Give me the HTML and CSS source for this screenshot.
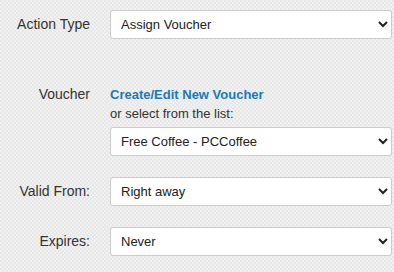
FILE: index.html
```html
<!DOCTYPE html>
<html lang="en">
<head>
    <meta charset="UTF-8">
    <title>Action Settings</title>
    <link rel="stylesheet" href="styles.css">
</head>
<body>

    <div class="form">
        <div class="row">
            <label class="label">Action Type</label>
            <select class="field">
                <option>Assign Voucher</option>
            </select>
        </div>

        <!-- voucher picker -->
        <div class="row row-top voucher-row">
            <label class="label">Voucher</label>
            <div class="voucher">
                <a href="#" class="link">Create/Edit New Voucher</a>
                <div class="hint">or select from the list:</div>
                <select class="field">
                    <option>Free Coffee - PCCoffee</option>
                </select>
            </div>
        </div>

        <div class="row">
            <label class="label">Valid From:</label>
            <select class="field">
                <option>Right away</option>
            </select>
        </div>

        <div class="row">
            <label class="label">Expires:</label>
            <select class="field">
                <option>Never</option>
            </select>
        </div>
    </div>

</body>
</html>
```

FILE: styles.css
```css
body {
    margin: 0;
    font-family: "Liberation Sans", Arial, sans-serif;
    font-size: 14px;
    color: #333;
    background-color: #ececec;
    background-image: repeating-conic-gradient(#f1f1f1 0 25%, #e7e7e7 0 50%);
    background-size: 4px 4px;
}
.form {
    padding: 10px 2px 0 0;
}
.row {
    display: grid;
    grid-template-columns: 90px 1fr;
    column-gap: 20px;
    align-items: center;
    margin-bottom: 21px;
}
.row-top {
    align-items: start;
}
.voucher-row {
    margin-top: 46px;
}
.label {
    text-align: right;
    line-height: 19px;
}
.field {
    width: 100%;
    height: 29px;
    padding: 0 6px;
    font-family: "Liberation Sans", Arial, sans-serif;
    font-size: 13px;
    color: #222;
    background: white;
    border: 1px solid #ccc;
    border-radius: 3px;
}
.link {
    display: block;
    color: #1a7ab5;
    font-size: 13px;
    font-weight: bold;
    text-decoration: none;
    line-height: 19px;
}
.hint {
    font-size: 13px;
    line-height: 19px;
    margin-bottom: 4px;
}
```
